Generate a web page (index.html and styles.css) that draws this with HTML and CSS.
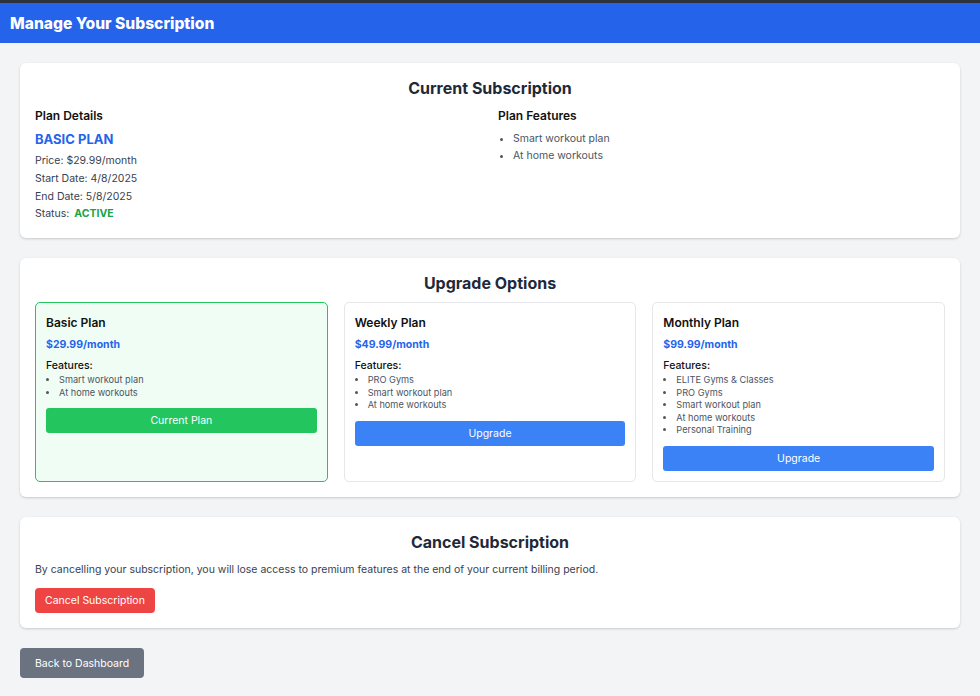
FILE: index.html
```html
<!DOCTYPE html>
<html lang="en">
<head>
<meta charset="utf-8">
<title>Manage Your Subscription</title>
<link rel="stylesheet" href="styles.css">
</head>
<body>
<header class="topbar">
  <h1 class="topbar-title">Manage Your Subscription</h1>
</header>
<main class="content">
  <section class="card">
    <h2 class="card-title">Current Subscription</h2>
    <div class="current-grid">
      <div class="details">
        <h3 class="sub-title">Plan Details</h3>
        <p class="plan-name">BASIC PLAN</p>
        <p class="detail-row">Price: $29.99/month</p>
        <p class="detail-row">Start Date: 4/8/2025</p>
        <p class="detail-row">End Date: 5/8/2025</p>
        <p class="detail-row">Status: <span class="status-active">ACTIVE</span></p>
      </div>
      <div class="features">
        <h3 class="sub-title">Plan Features</h3>
        <ul class="feature-list">
          <li>Smart workout plan</li>
          <li>At home workouts</li>
        </ul>
      </div>
    </div>
  </section>

  <section class="card">
    <h2 class="card-title">Upgrade Options</h2>
    <div class="plans">
      <div class="plan plan-current">
        <h3 class="plan-title">Basic Plan</h3>
        <p class="plan-price">$29.99/month</p>
        <p class="plan-features-label">Features:</p>
        <ul class="plan-list">
          <li>Smart workout plan</li>
          <li>At home workouts</li>
        </ul>
        <button class="btn btn-green btn-block">Current Plan</button>
      </div>
      <div class="plan">
        <h3 class="plan-title">Weekly Plan</h3>
        <p class="plan-price">$49.99/month</p>
        <p class="plan-features-label">Features:</p>
        <ul class="plan-list">
          <li>PRO Gyms</li>
          <li>Smart workout plan</li>
          <li>At home workouts</li>
        </ul>
        <button class="btn btn-blue btn-block">Upgrade</button>
      </div>
      <div class="plan">
        <h3 class="plan-title">Monthly Plan</h3>
        <p class="plan-price">$99.99/month</p>
        <p class="plan-features-label">Features:</p>
        <ul class="plan-list">
          <li>ELITE Gyms &amp; Classes</li>
          <li>PRO Gyms</li>
          <li>Smart workout plan</li>
          <li>At home workouts</li>
          <li>Personal Training</li>
        </ul>
        <button class="btn btn-blue btn-block">Upgrade</button>
      </div>
    </div>
  </section>

  <section class="card">
    <h2 class="card-title">Cancel Subscription</h2>
    <p class="cancel-text">By cancelling your subscription, you will lose access to premium features at the end of your current billing period.</p>
    <button class="btn btn-red">Cancel Subscription</button>
  </section>

  <div class="footer-actions">
    <button class="btn btn-gray btn-back">Back to Dashboard</button>
  </div>
</main>
</body>
</html>
```

FILE: styles.css
```css
* { box-sizing: border-box; }

html, body {
  margin: 0;
  padding: 0;
}

body {
  background: #f3f4f6;
  font-family: Inter, "Open Sans", "Liberation Sans", sans-serif;
  color: #1f2937;
  border-top: 3px solid #2d3139;
}

h1, h2, h3, p, ul { margin: 0; padding: 0; }

.topbar {
  background: #2563eb;
  height: 40px;
  display: flex;
  align-items: center;
  padding: 0 10px;
}

.topbar-title {
  color: #ffffff;
  font-size: 15.6px;
  font-weight: 800;
}

.content {
  padding: 20px;
  display: flex;
  flex-direction: column;
  gap: 20px;
}

.card {
  background: #ffffff;
  border-radius: 6px;
  box-shadow: 0 1px 3px rgba(0,0,0,0.12), 0 1px 2px rgba(0,0,0,0.06);
  padding: 15px;
}

.card-title {
  text-align: center;
  font-size: 16px;
  line-height: 20px;
  font-weight: 700;
  color: #1f2937;
  margin-bottom: 9px;
}

.current-grid {
  display: grid;
  grid-template-columns: 1fr 1fr;
  gap: 16px;
}

.sub-title {
  font-size: 12px;
  line-height: 18px;
  font-weight: 600;
  color: #111111;
  margin-bottom: 5px;
}

.plan-name {
  font-size: 13px;
  line-height: 18px;
  font-weight: 700;
  color: #2563eb;
  margin-bottom: 4px;
}

.detail-row {
  font-size: 10.5px;
  line-height: 17.8px;
  color: #374151;
}

.status-active {
  color: #16a34a;
  font-weight: 700;
  margin-left: 2px;
}

.feature-list {
  list-style: disc;
  padding-left: 15px;
  font-size: 10.5px;
  line-height: 17px;
  color: #4b5563;
}

.feature-list li::marker { color: #555; }

.plans {
  display: grid;
  grid-template-columns: repeat(3, 1fr);
  gap: 16px;
  align-items: stretch;
  margin-top: 1px;
}

.plan {
  border: 1px solid #e5e7eb;
  border-radius: 5px;
  padding: 11px 10px 10px;
  min-height: 180px;
}

.plan-current {
  border-color: #22c55e;
  background: #f0fdf4;
}

.plan-title {
  font-size: 12px;
  line-height: 18px;
  font-weight: 600;
  color: #111111;
  margin-bottom: 5px;
}

.plan-price {
  font-size: 10.5px;
  line-height: 16px;
  font-weight: 700;
  color: #2563eb;
  margin-bottom: 5px;
}

.plan-features-label {
  font-size: 10.5px;
  line-height: 16px;
  font-weight: 500;
  color: #111111;
}

.plan-list {
  list-style: disc;
  padding-left: 13px;
  font-size: 9.2px;
  line-height: 12.5px;
  color: #4b5563;
  margin-bottom: 9px;
}

.plan-list li::marker { color: #555; }

.btn {
  font-family: inherit;
  border: none;
  border-radius: 3px;
  color: #ffffff;
  font-size: 10.5px;
  cursor: pointer;
}

.btn-block {
  display: block;
  width: 100%;
  height: 25px;
}

.btn-green { background: #22c55e; }
.btn-blue { background: #3b82f6; }

.cancel-text {
  font-size: 10.5px;
  line-height: 16px;
  color: #374151;
  margin-top: 10px;
  margin-bottom: 10px;
}

.btn-red {
  background: #ef4444;
  height: 25px;
  padding: 0 10px;
  border-radius: 4px;
}

.footer-actions {
  display: flex;
}

.btn-gray {
  background: #6b7280;
  height: 30px;
  padding: 0 15px;
  border-radius: 4px;
}
```
